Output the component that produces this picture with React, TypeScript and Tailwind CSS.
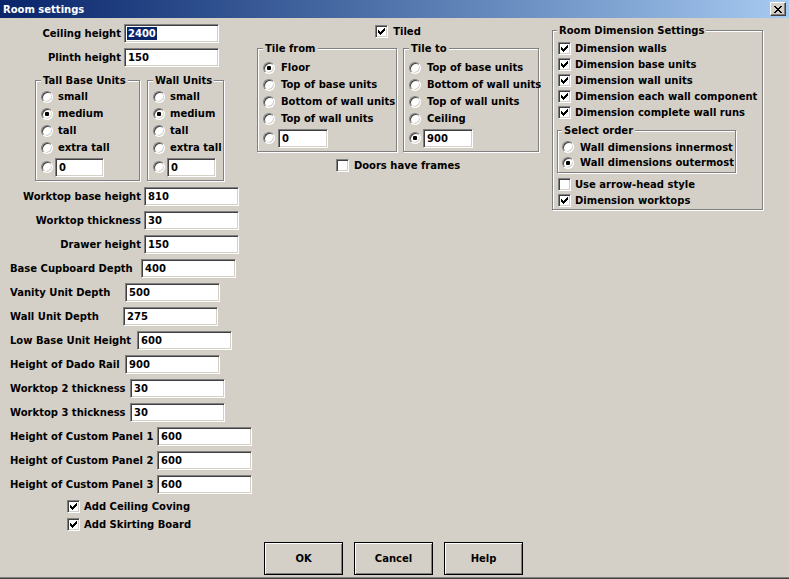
import React from "react";

const Edit = ({ value, w = "w-[95px]", selected = false }: { value: string; w?: string; selected?: boolean }) => (
  <div
    className={`${w} h-[19px] shrink-0 bg-white border border-t-[#808080] border-l-[#808080] border-b-white border-r-white shadow-[inset_1px_1px_0_#404040,inset_-1px_-1px_0_#d4d0c8] pl-[2px] flex items-center`}
  >
    {selected ? <span className="bg-[#0a246a] text-white px-px">{value}</span> : <span className="px-px">{value}</span>}
  </div>
);

const Radio = ({ checked = false }: { checked?: boolean }) => (
  <span className="relative w-[12px] h-[12px] shrink-0 rounded-full bg-white border border-t-[#808080] border-l-[#808080] border-b-white border-r-white shadow-[inset_1px_1px_0_#404040,inset_-1px_-1px_0_#d4d0c8] flex items-center justify-center">
    {checked && <span className="w-[4px] h-[4px] bg-black rounded-[1px]" />}
  </span>
);

const Check = ({ checked = false }: { checked?: boolean }) => (
  <span className="w-[13px] h-[13px] shrink-0 bg-white border border-t-[#808080] border-l-[#808080] border-b-white border-r-white shadow-[inset_1px_1px_0_#404040,inset_-1px_-1px_0_#d4d0c8] flex items-center justify-center">
    {checked && (
      <svg width="7" height="7" viewBox="0 0 7 7" shapeRendering="crispEdges">
        <path
          fill="#000"
          d="M0 2h1v3h-1zM1 3h1v3h-1zM2 4h1v3h-1zM3 3h1v3h-1zM4 2h1v3h-1zM5 1h1v3h-1zM6 0h1v3h-1z"
        />
      </svg>
    )}
  </span>
);

const Group = ({ title, className, children }: { title: string; className: string; children: React.ReactNode }) => (
  <fieldset
    className={`${className} shrink-0 border border-[#808080] shadow-[1px_1px_0_#fff,inset_1px_1px_0_#fff] min-w-0`}
  >
    <legend className="px-[2px] leading-[13px] bg-[#d4d0c8] whitespace-nowrap">{title}</legend>
    {children}
  </fieldset>
);

const RadioRow = ({ label, checked = false, h = "h-[17px]", gap = "gap-[5px]" }: { label: string; checked?: boolean; h?: string; gap?: string }) => (
  <div className={`${h} flex items-center ${gap} whitespace-nowrap`}>
    <Radio checked={checked} />
    <span>{label}</span>
  </div>
);

const CheckRow = ({ label, checked = false, h = "h-[16px]" }: { label: string; checked?: boolean; h?: string }) => (
  <div className={`${h} flex items-center gap-[4px] whitespace-nowrap`}>
    <Check checked={checked} />
    <span>{label}</span>
  </div>
);

const Row = ({ label, value, lc, selected = false }: { label: string; value: string; lc: string; selected?: boolean }) => (
  <div className="h-[24px] flex items-center">
    <span className={`${lc} shrink-0 whitespace-nowrap`}>{label}</span>
    <Edit value={value} selected={selected} />
  </div>
);

const Button = ({ label }: { label: string }) => (
  <button className="w-[79px] h-[33px] bg-[#d4d0c8] border border-black shadow-[inset_1px_1px_0_#fff,inset_-1px_-1px_0_#808080] flex items-center justify-center">
    {label}
  </button>
);

export default function App() {
  return (
    <div className="w-[789px] h-[579px] overflow-hidden bg-[#d4d0c8] text-black font-['DejaVu_Sans',sans-serif] font-bold text-[10px] leading-[13px] flex flex-col">
      {/* Title bar */}
      <div className="h-[18px] shrink-0 bg-gradient-to-r from-[#0a246a] to-[#a6caf0] flex items-center justify-between pl-[3px] pr-[3px]">
        <span className="text-white">Room settings</span>
        <span className="w-[16px] h-[14px] bg-[#d4d0c8] border border-t-white border-l-white border-b-[#404040] border-r-[#404040] shadow-[inset_-1px_-1px_0_#808080] flex items-center justify-center">
          <svg width="8" height="7" viewBox="0 0 8 7" shapeRendering="crispEdges">
            <path
              fill="#000"
              d="M0 0h2v1h-2zM6 0h2v1h-2zM1 1h2v1h-2zM5 1h2v1h-2zM2 2h4v1h-4zM3 3h2v1h-2zM2 4h4v1h-4zM1 5h2v1h-2zM5 5h2v1h-2zM0 6h2v1h-2zM6 6h2v1h-2z"
            />
          </svg>
        </span>
      </div>

      {/* Main content */}
      <div className="flex-1 min-h-0 flex">
        {/* Left column */}
        <div className="w-[257px] shrink-0 flex flex-col pt-[3px]">
          <Row label="Ceiling height" value="2400" lc="w-[124px] text-right pr-[3px]" selected />
          <Row label="Plinth height" value="150" lc="w-[124px] text-right pr-[3px]" />

          <div className="flex gap-[7px] ml-[35px] mt-[5px]">
            <Group title="Tall Base Units" className="w-[105px] pl-[5px] pt-[1px] pb-[2px]">
              <RadioRow label="small" />
              <RadioRow label="medium" checked />
              <RadioRow label="tall" />
              <RadioRow label="extra tall" />
              <div className="h-[22px] flex items-center gap-[2px]">
                <Radio />
                <Edit value="0" w="w-[49px]" />
              </div>
            </Group>
            <Group title="Wall Units" className="w-[77px] pl-[5px] pt-[1px] pb-[2px]">
              <RadioRow label="small" />
              <RadioRow label="medium" checked />
              <RadioRow label="tall" />
              <RadioRow label="extra tall" />
              <div className="h-[22px] flex items-center gap-[2px]">
                <Radio />
                <Edit value="0" w="w-[49px]" />
              </div>
            </Group>
          </div>

          <div className="mt-[3px] flex flex-col">
            <Row label="Worktop base height" value="810" lc="w-[144px] text-right pr-[3px]" />
            <Row label="Worktop thickness" value="30" lc="w-[144px] text-right pr-[3px]" />
            <Row label="Drawer height" value="150" lc="w-[144px] text-right pr-[3px]" />
            <Row label="Base Cupboard Depth" value="400" lc="w-[141px] pl-[10px]" />
            <Row label="Vanity Unit Depth" value="500" lc="w-[125px] pl-[10px]" />
            <Row label="Wall Unit Depth" value="275" lc="w-[123px] pl-[10px]" />
            <Row label="Low Base Unit Height" value="600" lc="w-[137px] pl-[10px]" />
            <Row label="Height of Dado Rail" value="900" lc="w-[125px] pl-[10px]" />
            <Row label="Worktop 2 thickness" value="30" lc="w-[130px] pl-[10px]" />
            <Row label="Worktop 3 thickness" value="30" lc="w-[130px] pl-[10px]" />
            <Row label="Height of Custom Panel 1" value="600" lc="w-[157px] pl-[10px]" />
            <Row label="Height of Custom Panel 2" value="600" lc="w-[157px] pl-[10px]" />
            <Row label="Height of Custom Panel 3" value="600" lc="w-[157px] pl-[10px]" />
          </div>

          <div className="ml-[67px] mt-[1px] flex flex-col">
            <CheckRow label="Add Ceiling Coving" checked h="h-[18px]" />
            <CheckRow label="Add Skirting Board" checked h="h-[18px]" />
          </div>
        </div>

        {/* Middle column */}
        <div className="w-[282px] shrink-0 flex flex-col pt-[6px]">
          <div className="h-[14px] flex items-center justify-center gap-[5px]">
            <Check checked />
            <span>Tiled</span>
          </div>
          <div className="flex gap-[6px] mt-[4px]">
            <Group title="Tile from" className="w-[140px] pl-[5px] pt-[4px] pb-[2px]">
              <RadioRow label="Floor" checked gap="gap-[6px]" />
              <RadioRow label="Top of base units" gap="gap-[6px]" />
              <RadioRow label="Bottom of wall units" gap="gap-[6px]" />
              <RadioRow label="Top of wall units" gap="gap-[6px]" />
              <div className="h-[22px] flex items-center gap-[3px]">
                <Radio />
                <Edit value="0" w="w-[50px]" />
              </div>
            </Group>
            <Group title="Tile to" className="w-[136px] pl-[5px] pt-[4px] pb-[2px]">
              <RadioRow label="Top of base units" gap="gap-[6px]" />
              <RadioRow label="Bottom of wall units" gap="gap-[6px]" />
              <RadioRow label="Top of wall units" gap="gap-[6px]" />
              <RadioRow label="Ceiling" gap="gap-[6px]" />
              <div className="h-[22px] flex items-center gap-[2px]">
                <Radio checked />
                <Edit value="900" w="w-[50px]" />
              </div>
            </Group>
          </div>
          <div className="h-[14px] mt-[6px] flex items-center justify-center gap-[5px]">
            <Check />
            <span>Doors have frames</span>
          </div>
        </div>

        {/* Right column */}
        <div className="ml-[13px] flex flex-col pt-[6px]">
          <Group title="Room Dimension Settings" className="w-[211px] pl-[4px] pt-[3px] pb-[1px]">
            <div className="pl-[1px]">
              <CheckRow label="Dimension walls" checked />
              <CheckRow label="Dimension base units" checked />
              <CheckRow label="Dimension wall units" checked />
              <CheckRow label="Dimension each wall component" checked />
              <CheckRow label="Dimension complete wall runs" checked />
            </div>
            <div className="mt-[4px]">
              <Group title="Select order" className="w-[179px] pl-[4px] pt-[2px] pb-[2px]">
                <RadioRow label="Wall dimensions innermost" h="h-[16px]" gap="gap-[6px]" />
                <RadioRow label="Wall dimensions outermost" checked h="h-[15px]" gap="gap-[6px]" />
              </Group>
            </div>
            <div className="pl-[1px] mt-[3px]">
              <CheckRow label="Use arrow-head style" />
              <CheckRow label="Dimension worktops" checked />
            </div>
          </Group>
        </div>
      </div>

      {/* Buttons */}
      <div className="shrink-0 flex justify-center gap-[11px] pr-[2px] mb-[2px]">
        <Button label="OK" />
        <Button label="Cancel" />
        <Button label="Help" />
      </div>
      <div className="h-[1px] shrink-0 bg-[#808080]" />
      <div className="h-[1px] shrink-0 bg-[#404040]" />
    </div>
  );
}
